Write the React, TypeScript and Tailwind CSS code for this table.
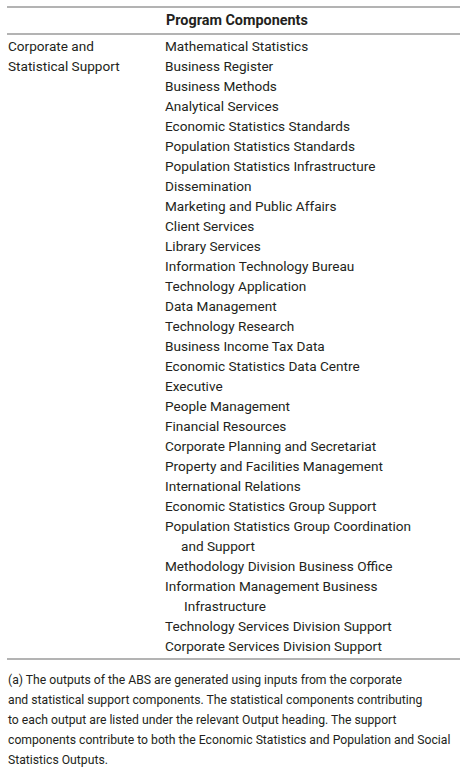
const components: { text: string; rest?: string; restPad?: string }[] = [
  { text: 'Mathematical Statistics' },
  { text: 'Business Register' },
  { text: 'Business Methods' },
  { text: 'Analytical Services' },
  { text: 'Economic Statistics Standards' },
  { text: 'Population Statistics Standards' },
  { text: 'Population Statistics Infrastructure' },
  { text: 'Dissemination' },
  { text: 'Marketing and Public Affairs' },
  { text: 'Client Services' },
  { text: 'Library Services' },
  { text: 'Information Technology Bureau' },
  { text: 'Technology Application' },
  { text: 'Data Management' },
  { text: 'Technology Research' },
  { text: 'Business Income Tax Data' },
  { text: 'Economic Statistics Data Centre' },
  { text: 'Executive' },
  { text: 'People Management' },
  { text: 'Financial Resources' },
  { text: 'Corporate Planning and Secretariat' },
  { text: 'Property and Facilities Management' },
  { text: 'International Relations' },
  { text: 'Economic Statistics Group Support' },
  { text: 'Population Statistics Group Coordination', rest: 'and Support', restPad: 'pl-[16px]' },
  { text: 'Methodology Division Business Office' },
  { text: 'Information Management Business', rest: 'Infrastructure', restPad: 'pl-[19px]' },
  { text: 'Technology Services Division Support' },
  { text: 'Corporate Services Division Support' },
];

export default function App() {
  return (
    <div className="min-h-screen bg-white pt-[6px] text-[13.6px] leading-5 text-[#231f20] [font-family:Roboto,'Liberation_Sans',sans-serif]">
      <div className="mx-[7px] w-[453px] border-t-2 border-[#b3b3b3]">
        <div className="flex h-[27px] items-center border-b-2 border-[#b3b3b3]">
          <div className="w-[159px] shrink-0" />
          <div className="text-[14.4px] font-bold">Program Components</div>
        </div>
        <div className="flex pt-[1px] pb-[2px]">
          <div className="w-[158px] shrink-0 pl-px">
            Corporate and
            <br />
            Statistical Support
          </div>
          <ul>
            {components.map((c) => (
              <li key={c.text}>
                <div>{c.text}</div>
                {c.rest && <div className={c.restPad}>{c.rest}</div>}
              </li>
            ))}
          </ul>
        </div>
        <div className="border-t-2 border-[#b3b3b3] pt-[10px] pl-px text-[12.2px]">
          (a) The outputs of the ABS are generated using inputs from the corporate
          <br />
          and statistical support components. The statistical components contributing
          <br />
          to each output are listed under the relevant Output heading. The support
          <br />
          components contribute to both the Economic Statistics and Population and Social
          <br />
          Statistics Outputs.
        </div>
      </div>
    </div>
  );
}
